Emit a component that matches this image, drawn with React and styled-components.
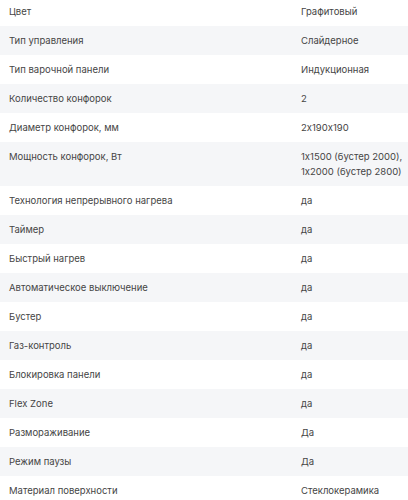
import React from 'react'
import styled, { createGlobalStyle } from 'styled-components'

const GlobalStyle = createGlobalStyle`
  html, body {
    margin: 0;
    padding: 0;
    background: #ffffff;
  }
  body {
    font-family: Inter, "Noto Sans", sans-serif;
    font-feature-settings: "calt" 0;
  }
`

const specs = [
  ['Цвет', ['Графитовый']],
  ['Тип управления', ['Слайдерное']],
  ['Тип варочной панели', ['Индукционная']],
  ['Количество конфорок', ['2']],
  ['Диаметр конфорок, мм', ['2x190x190']],
  ['Мощность конфорок, Вт', ['1x1500 (бустер 2000),', '1x2000 (бустер 2800)']],
  ['Технология непрерывного нагрева', ['да']],
  ['Таймер', ['да']],
  ['Быстрый нагрев', ['да']],
  ['Автоматическое выключение', ['да']],
  ['Бустер', ['да']],
  ['Газ-контроль', ['да']],
  ['Блокировка панели', ['да']],
  ['Flex Zone', ['да']],
  ['Размораживание', ['Да']],
  ['Режим паузы', ['Да']],
  ['Материал поверхности', ['Стеклокерамика']],
]

const SpecTable = styled.div`
  width: 408px;
  margin-top: -3px;
  display: flex;
  flex-direction: column;
`

const Row = styled.div`
  display: grid;
  grid-template-columns: 1fr 107px;
  padding: 7px 0 7px 9px;
  background: ${p => (p.$striped ? '#f5f6f8' : '#ffffff')};
  font-size: 9.5px;
  line-height: 15px;
  color: #454545;
`

const Label = styled.div`
  white-space: nowrap;
`

const Value = styled.div`
  display: flex;
  flex-direction: column;
  white-space: nowrap;
`

export default function App() {
  return (
    <>
      <GlobalStyle />
      <SpecTable>
        {specs.map(([label, lines], i) => (
          <Row key={label} $striped={i % 2 === 1}>
            <Label>{label}</Label>
            <Value>
              {lines.map(line => <span key={line}>{line}</span>)}
            </Value>
          </Row>
        ))}
      </SpecTable>
    </>
  )
}
